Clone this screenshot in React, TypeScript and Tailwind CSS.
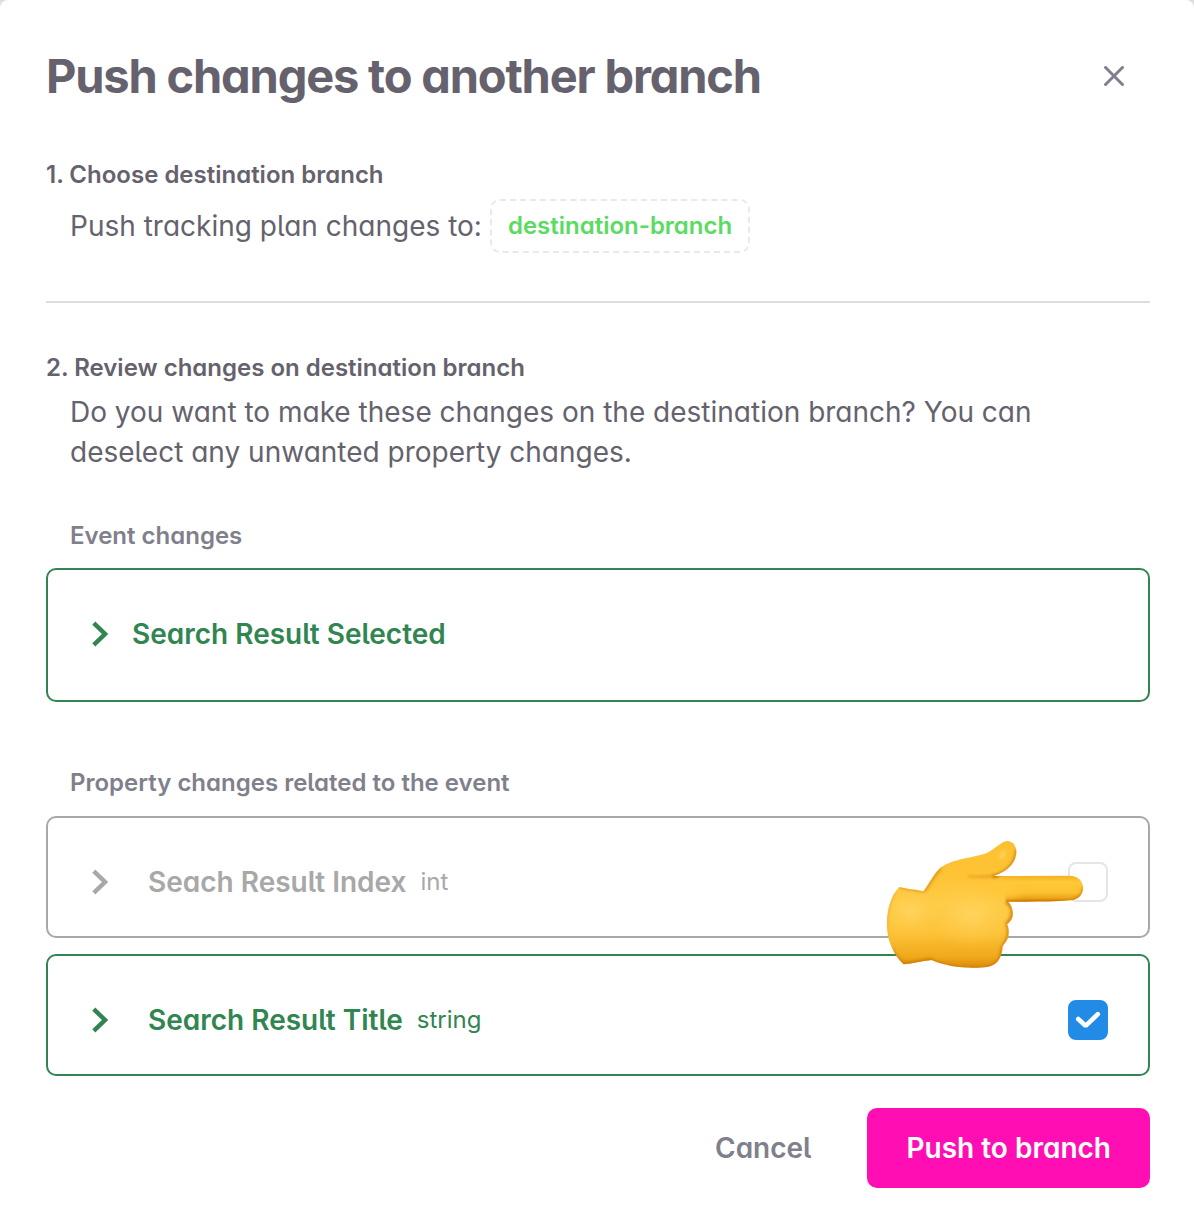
import { useState } from "react";

function Chevron() {
  return (
    <svg aria-hidden="true" viewBox="0 0 16 26" className="h-[26px] w-4 shrink-0" fill="none">
      <path d="M1.8 2.2 13 13 1.8 23.8" stroke="currentColor" strokeWidth="4.4" />
    </svg>
  );
}

function PointingHand() {
  return (
    <svg
      aria-hidden="true"
      viewBox="78 54 600 396"
      className="pointer-events-none absolute top-5 right-[62px] z-10 h-[132px] w-[200px]"
    >
      <defs>
        <linearGradient id="palm" x1="0" y1="0" x2="0" y2="1">
          <stop offset="0" stopColor="#fdc02f" />
          <stop offset="0.3" stopColor="#fec436" />
          <stop offset="0.5" stopColor="#ffcb46" />
          <stop offset="0.72" stopColor="#fdc238" />
          <stop offset="0.9" stopColor="#f0a91b" />
          <stop offset="1" stopColor="#d98508" />
        </linearGradient>
        <linearGradient id="finger" x1="0" y1="0" x2="0" y2="1">
          <stop offset="0" stopColor="#f3b022" />
          <stop offset="0.25" stopColor="#ffc938" />
          <stop offset="0.65" stopColor="#fdc031" />
          <stop offset="0.88" stopColor="#eba216" />
          <stop offset="1" stopColor="#c97407" />
        </linearGradient>
        <radialGradient id="glow">
          <stop offset="0" stopColor="#ffd766" stopOpacity="0.75" />
          <stop offset="1" stopColor="#ffcf4d" stopOpacity="0" />
        </radialGradient>
        <filter id="soft" x="-20%" y="-20%" width="140%" height="140%">
          <feGaussianBlur stdDeviation="5" />
        </filter>
        <filter id="softer" x="-40%" y="-60%" width="180%" height="220%">
          <feGaussianBlur stdDeviation="14" />
        </filter>
        <clipPath id="hand">
          <path d="M118 201 C140 207 166 208 190 214 C207 193 220 162 243 142 C275 117 342 113 382 98 C407 87 423 63 444 63 C464 65 471 85 468 103 C464 137 431 159 401 168 L625 167 C652 166 669 181 669 204 C668 228 651 239 632 241 C570 246 505 245 444 245 C458 259 462 283 455 296 C451 306 444 309 441 313 C449 330 446 350 440 361 C434 372 426 377 427 386 C424 413 411 435 385 440 C335 447 267 443 215 420 C184 423 158 431 131 433 C100 403 81 362 81 315 C80 273 91 229 118 201 Z" />
        </clipPath>
      </defs>
      <g clipPath="url(#hand)">
        <rect x="78" y="54" width="600" height="396" fill="url(#palm)" />
        <path
          d="M425 167 H625 C652 166 669 181 669 204 C668 228 651 239 632 241 C570 246 505 245 438 245 Z"
          fill="url(#finger)"
        />
        <ellipse cx="410" cy="212" rx="70" ry="24" fill="#ffc73b" filter="url(#softer)" />
        <ellipse cx="335" cy="285" rx="135" ry="95" fill="url(#glow)" />
        <ellipse cx="150" cy="275" rx="95" ry="75" fill="url(#glow)" />
        <g fill="none" stroke="#c87306" filter="url(#soft)">
          <path d="M472 88 C472 138 434 162 398 170" strokeWidth="11" />
          <path d="M405 168 C370 171 345 170 325 169" strokeWidth="4" opacity="0.7" />
          <path d="M444 247 C464 264 462 292 443 311 C453 337 445 362 429 383 C426 415 412 438 385 445 C330 451 268 446 215 425" strokeWidth="12" opacity="0.85" />
          <path d="M437 248 C520 249 590 247 635 245 C657 238 672 225 672 201" strokeWidth="8" />
          <path d="M92 390 C104 412 115 424 131 435 C160 432 186 425 218 420" strokeWidth="14" opacity="0.8" />
          <path d="M192 214 C211 190 221 162 243 143" strokeWidth="9" opacity="0.6" />
          <path d="M118 201 C140 207 166 208 190 214" strokeWidth="6" opacity="0.65" />
          <path d="M81 370 C72 310 82 245 105 215" strokeWidth="7" opacity="0.4" />
        </g>
        <ellipse cx="428" cy="104" rx="15" ry="9" transform="rotate(-55 428 104)" fill="#ffd055" filter="url(#soft)" />
      </g>
    </svg>
  );
}

type PropertyRowProps = {
  name: string;
  type: string;
  checked: boolean;
  onChange: (checked: boolean) => void;
  pointed?: boolean;
};

function PropertyRow({ name, type, checked, onChange, pointed }: PropertyRowProps) {
  return (
    <li
      className={`relative flex items-center rounded-[10px] border-2 pt-[44px] pr-10 pb-[34px] pl-11 ${
        checked ? "border-[#318551] text-[#318551]" : "border-[#a8a8a8] text-[#a8a8a8]"
      }`}
    >
      <button type="button" aria-label={`Expand ${name}`}>
        <Chevron />
      </button>
      <label className="flex flex-1 items-center pl-10">
        <span className="text-[28px] leading-10 font-semibold">{name}</span>
        <span className="pl-[14px] text-2xl leading-10">{type}</span>
        <span className="relative ml-auto size-10">
          <input
            type="checkbox"
            checked={checked}
            onChange={(e) => onChange(e.target.checked)}
            className="block size-10 appearance-none rounded-lg border-2 border-[#e5e5e5] bg-white checked:border-[#228be6] checked:bg-[#228be6]"
          />
          {checked && (
            <svg
              aria-hidden="true"
              viewBox="0 0 40 40"
              className="pointer-events-none absolute inset-0 size-10"
              fill="none"
              stroke="white"
              strokeWidth="4.6"
              strokeLinecap="round"
            >
              <path d="M10.2 19 17.6 25.8 29.8 14.2" strokeLinejoin="bevel" />
            </svg>
          )}
        </span>
      </label>
      {pointed && <PointingHand />}
    </li>
  );
}

export default function App() {
  const [index, setIndex] = useState(false);
  const [title, setTitle] = useState(true);

  return (
    <div className="min-h-screen bg-[#dedede]">
      <main
        role="dialog"
        aria-labelledby="dialog-title"
        className="min-h-screen rounded-t-lg bg-white pt-11 pr-11 pb-10 pl-[46px] font-['Inter',sans-serif] text-[#65626e] [font-feature-settings:'cv05','cv11']"
      >
        <header className="flex items-center justify-between">
          <h1 id="dialog-title" className="text-[47px] leading-[64px] font-bold tracking-tight">
            Push changes to another branch
          </h1>
          <button type="button" aria-label="Close" className="mr-6 p-[2px] text-[#80808d]">
            <svg aria-hidden="true" viewBox="0 0 20 20" className="size-5" fill="none" stroke="currentColor" strokeWidth="3">
              <path d="M0.5 0.5 19.5 19.5M19.5 0.5 0.5 19.5" />
            </svg>
          </button>
        </header>

        <section className="mt-[51px] border-b-2 border-[#dddde1] pb-12">
          <h2 className="text-2xl leading-8 font-semibold">1. Choose destination branch</h2>
          <div className="mt-2 flex items-center gap-2 pl-6">
            <p className="text-[28px] leading-10">Push tracking plan changes to:</p>
            <button
              type="button"
              className="rounded-[10px] border-2 border-dashed border-[#e8e8ed] px-4 py-[9px] text-2xl leading-8 font-semibold text-[#5adb62]"
            >
              destination-branch
            </button>
          </div>
        </section>

        <section className="mt-[49px]">
          <h2 className="text-2xl leading-8 font-semibold">2. Review changes on destination branch</h2>
          <p className="mt-2 max-w-[1040px] pl-6 text-[28px] leading-10">
            Do you want to make these changes on the destination branch? You can deselect any unwanted property changes.
          </p>

          <h3 className="mt-12 pl-6 text-2xl leading-8 font-semibold text-[#80808d]">Event changes</h3>
          <div className="mt-4 rounded-[10px] border-2 border-[#318551] pt-11 pb-[46px] pl-11 text-[#318551]">
            <button type="button" className="flex items-center gap-6 text-[28px] leading-10 font-semibold">
              <Chevron />
              Search Result Selected
            </button>
          </div>

          <h3 className="mt-[65px] pl-6 text-2xl leading-8 font-semibold text-[#80808d]">
            Property changes related to the event
          </h3>
          <ul className="mt-[17px] flex flex-col gap-4">
            <PropertyRow name="Seach Result Index" type="int" checked={index} onChange={setIndex} pointed />
            <PropertyRow name="Search Result Title" type="string" checked={title} onChange={setTitle} />
          </ul>
        </section>

        <footer className="mt-8 flex justify-end gap-4 text-[28px] leading-10 font-semibold">
          <button type="button" className="px-10 py-5 text-[#80808d]">
            Cancel
          </button>
          <button type="button" className="rounded-[10px] bg-[#ff0fb3] px-[39px] py-5 text-white">
            Push to branch
          </button>
        </footer>
      </main>
    </div>
  );
}
